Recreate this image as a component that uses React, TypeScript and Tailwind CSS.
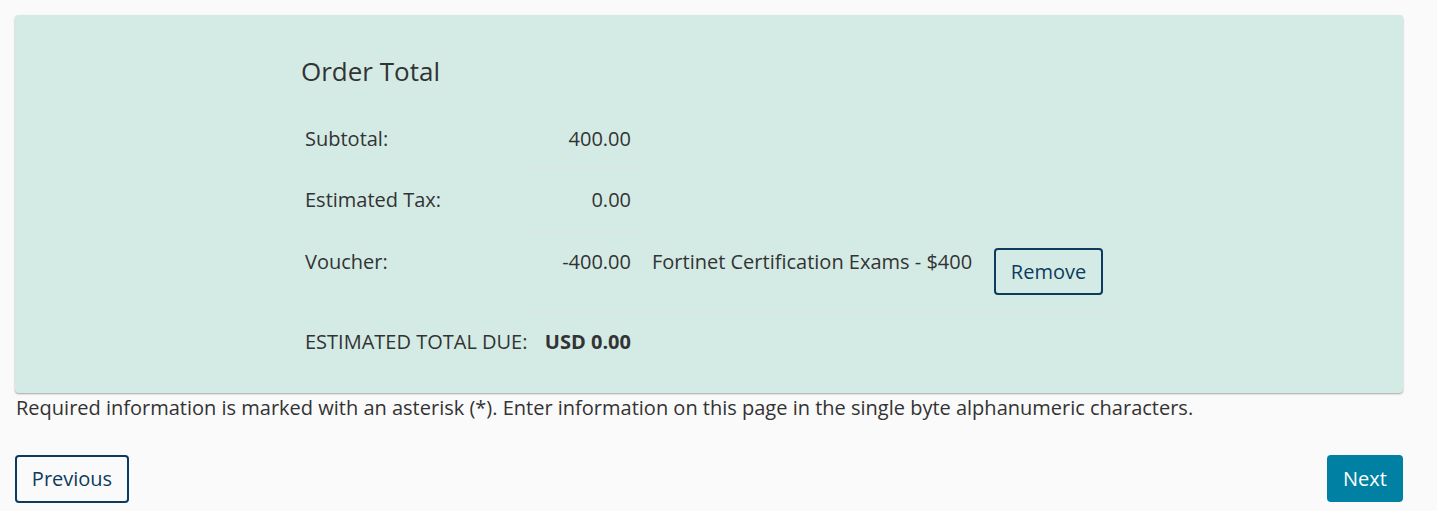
import React from "react";

const rows = [
  { label: "Subtotal:", value: "400.00", pb: "pb-[16px]" },
  { label: "Estimated Tax:", value: "0.00", pb: "pb-[17px]" },
];

export default function App() {
  return (
    <div
      className="min-h-[511px] bg-[#fafafa] pl-[15px] pr-[34px] pt-[15px] text-[20px] text-[#333]"
      style={{ fontFamily: '"Open Sans", "Noto Sans", sans-serif' }}
    >
      <section className="rounded-[4px] bg-[#d4ebe5] pb-[21px] pl-[279px] pt-[39px] shadow-[0_1px_2px_rgba(0,0,0,0.35)]">
        <h2 className="mb-[19px] ml-[7px] text-[26px] leading-[35px]">Order Total</h2>
        <table className="border-separate [border-spacing:2px_0] leading-[27px]">
          <tbody>
            {rows.map((r) => (
              <tr key={r.label}>
                <td className={`w-[237px] whitespace-nowrap pl-[9px] pr-[4px] pt-[17px] align-top ${r.pb}`}>{r.label}</td>
                <td className={`w-[105px] border-b border-[#e9dfe6] px-[9px] pt-[17px] text-right align-top ${r.pb}`}>
                  {r.value}
                </td>
              </tr>
            ))}
            <tr>
              <td className="py-[17px] pl-[9px] pr-[4px] align-top">Voucher:</td>
              <td className="border-b border-[#e9dfe6] px-[9px] py-[17px] text-right align-top">-400.00</td>
              <td className="w-[340px] whitespace-nowrap border-b border-[#e9dfe6] py-[17px] pl-[10px] align-top">
                Fortinet Certification Exams - $400
              </td>
              <td className="w-[128px] border-b border-[#e9dfe6] pb-[15px] pl-[10px] pt-[17px] align-top">
                <button className="h-[47px] w-[109px] rounded-[4px] border-2 border-[#0c3b5f] bg-transparent text-[20px] text-[#0c3b5f]">
                  Remove
                </button>
              </td>
            </tr>
            <tr>
              <td className="whitespace-nowrap py-[17px] pl-[9px] pr-[4px] align-top">ESTIMATED TOTAL DUE:</td>
              <td className="whitespace-nowrap px-[9px] py-[17px] text-right align-top font-bold">USD 0.00</td>
              <td />
              <td />
            </tr>
          </tbody>
        </table>
      </section>
      <p className="mt-[1px] pl-px leading-[27px]">
        Required information is marked with an asterisk (*). Enter information on this page in the single byte alphanumeric characters.
      </p>
      <div className="mt-[34px] flex items-start justify-between">
        <button className="h-[48px] w-[114px] rounded-[4px] border-2 border-[#0c3b5f] bg-transparent text-[20px] text-[#0c3b5f]">
          Previous
        </button>
        <button className="h-[47px] w-[76px] rounded-[4px] bg-[#0081a4] text-[20px] text-white">Next</button>
      </div>
    </div>
  );
}
